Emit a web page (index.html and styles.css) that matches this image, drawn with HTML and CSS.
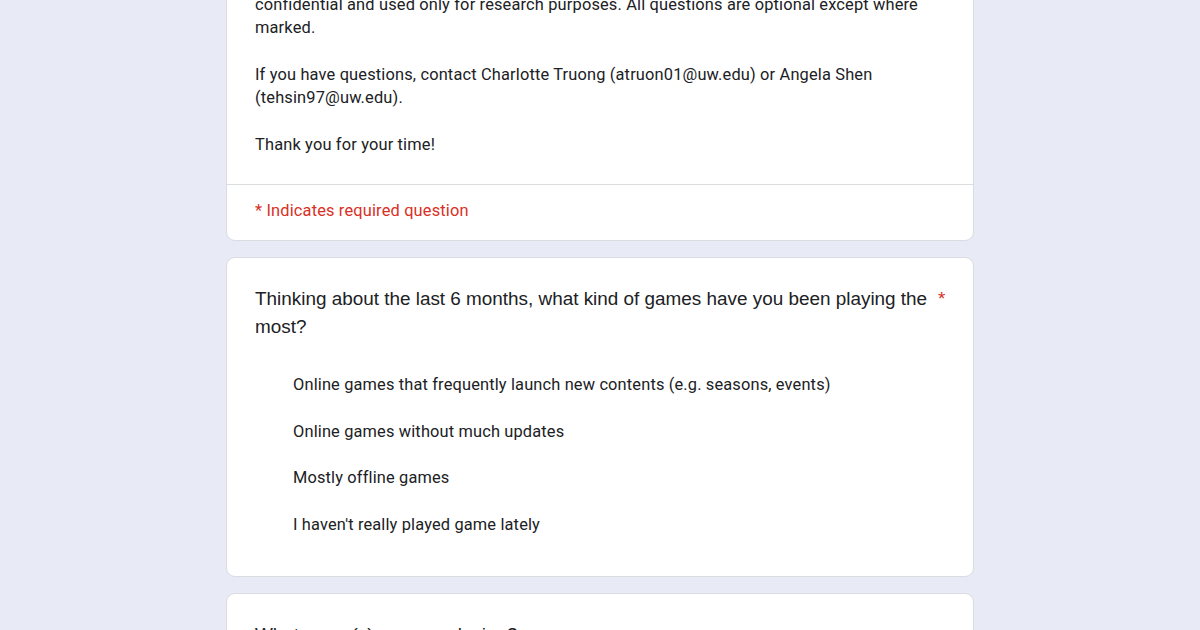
FILE: index.html
```html
<!DOCTYPE html>
<html lang="en">
<head>
<meta charset="utf-8">
<title>Survey</title>
<link rel="stylesheet" href="styles.css">
</head>
<body>
<main class="form">
  <section class="card header-card">
    <div class="description">
      <p>confidential and used only for research purposes. All questions are optional except where marked.</p>
      <p>If you have questions, contact Charlotte Truong (atruon01@uw.edu) or Angela Shen (tehsin97@uw.edu).</p>
      <p>Thank you for your time!</p>
    </div>
    <div class="required-note">* Indicates required question</div>
  </section>

  <section class="card question-card">
    <div class="question-title">
      <span class="title-text">Thinking about the last 6 months, what kind of games have you been playing the most?</span>
      <span class="asterisk">*</span>
    </div>
    <ul class="options">
      <li class="option"><span class="radio"></span><span class="option-text">Online games that frequently launch new contents (e.g. seasons, events)</span></li>
      <li class="option"><span class="radio"></span><span class="option-text">Online games without much updates</span></li>
      <li class="option"><span class="radio"></span><span class="option-text">Mostly offline games</span></li>
      <li class="option"><span class="radio"></span><span class="option-text">I haven't really played game lately</span></li>
    </ul>
  </section>

  <section class="card question-card">
    <div class="question-title">
      <span class="title-text">What game(s) are you playing?</span>
    </div>
  </section>
</main>
</body>
</html>
```

FILE: styles.css
```css
* { box-sizing: border-box; }

html, body {
  margin: 0;
  padding: 0;
  background: #e8eaf6;
  overflow: hidden;
}

body {
  height: 630px;
  font-family: Roboto, "Noto Sans", sans-serif;
  color: #202124;
}

.form {
  width: 748px;
  margin: -36px auto 0;
  display: flex;
  flex-direction: column;
  gap: 16px;
}

.card {
  background: #fff;
  border: 1px solid #dadce0;
  border-radius: 9px;
}

.header-card {
  border-top-left-radius: 0;
  border-top-right-radius: 0;
}

.description {
  padding: 28px 28px 28px;
  font-size: 16.4px;
  line-height: 23.3px;
  letter-spacing: 0.16px;
  border-bottom: 1px solid #dadce0;
}

.description p {
  margin: 0 0 23.3px;
}

.description p:last-child {
  margin-bottom: 0;
}

.required-note {
  padding: 14px 28px 18px;
  font-size: 16.4px;
  line-height: 23.3px;
  letter-spacing: 0.16px;
  color: #d93025;
}

.question-card {
  padding: 27px 28px 28px;
}

.question-title {
  display: flex;
  align-items: flex-start;
  font-family: "Liberation Sans", Arial, sans-serif;
  font-size: 18.9px;
  line-height: 28px;
  color: #202124;
}

.title-text {
  flex: 1;
}

.asterisk {
  flex: none;
  color: #d93025;
  padding-left: 5px;
  width: 12px;
  overflow: visible;
}

.options {
  list-style: none;
  margin: 20px 0 0;
  padding: 0;
}

.option {
  display: flex;
  align-items: center;
  height: 46.6px;
}

.radio {
  width: 38px;
  flex: none;
}

.option-text {
  font-size: 16.4px;
  letter-spacing: 0.15px;
  line-height: 23.3px;
  color: #202124;
}
```
